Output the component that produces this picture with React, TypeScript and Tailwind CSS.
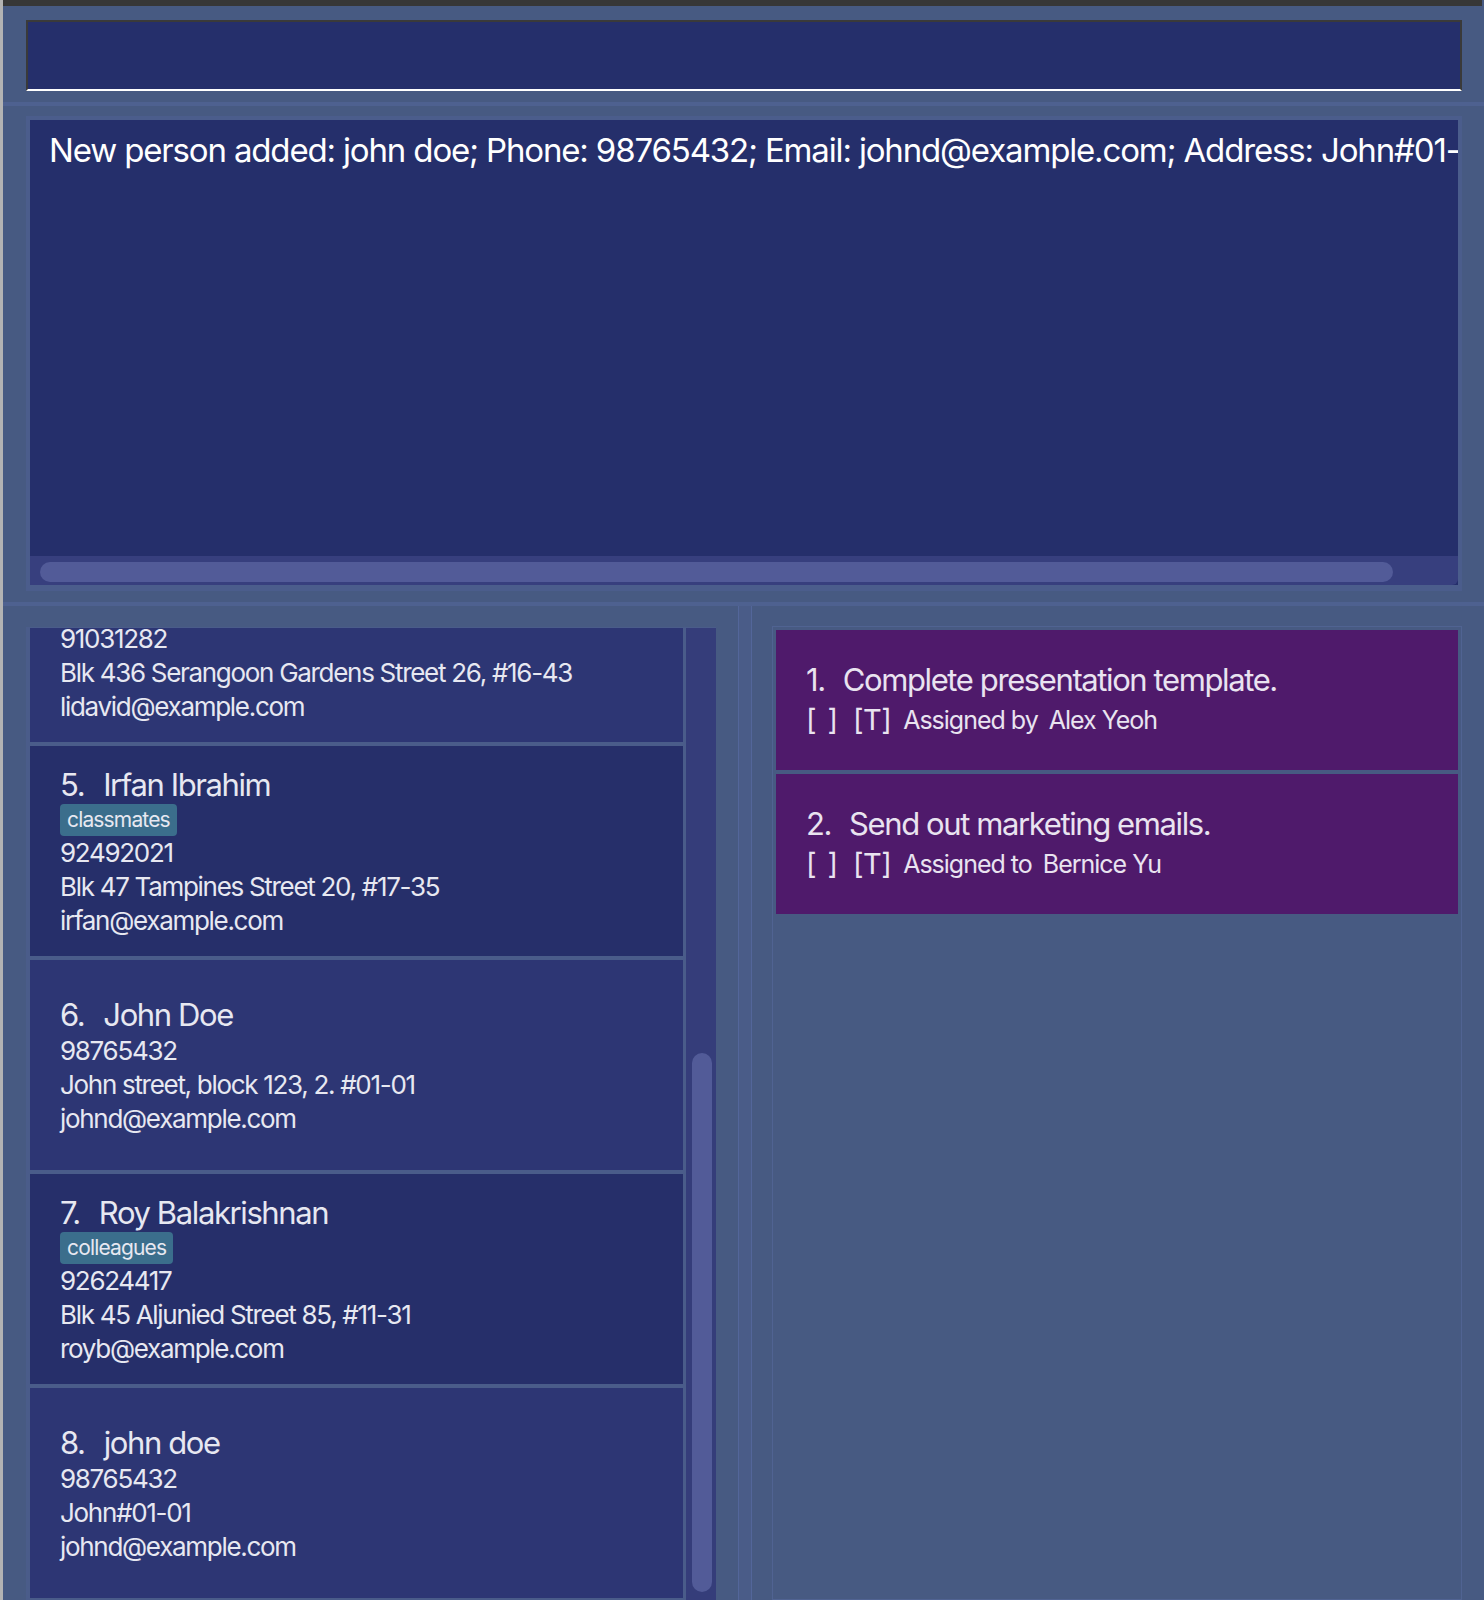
import React from 'react'

type Person = {
  id: number
  name: string
  tag?: string
  phone: string
  address: string
  email: string
}

// card 4 is scrolled partly out of view; only its last three lines show
const scrolledCard = {
  phone: '91031282',
  address: 'Blk 436 Serangoon Gardens Street 26, #16-43',
  email: 'lidavid@example.com',
}

const persons: Person[] = [
  { id: 5, name: 'Irfan Ibrahim', tag: 'classmates', phone: '92492021', address: 'Blk 47 Tampines Street 20, #17-35', email: 'irfan@example.com' },
  { id: 6, name: 'John Doe', phone: '98765432', address: 'John street, block 123, 2. #01-01', email: 'johnd@example.com' },
  { id: 7, name: 'Roy Balakrishnan', tag: 'colleagues', phone: '92624417', address: 'Blk 45 Aljunied Street 85, #11-31', email: 'royb@example.com' },
  { id: 8, name: 'john doe', phone: '98765432', address: 'John#01-01', email: 'johnd@example.com' },
]

const tasks = [
  { id: 1, title: 'Complete presentation template.', relation: 'Assigned by', who: 'Alex Yeoh' },
  { id: 2, title: 'Send out marketing emails.', relation: 'Assigned to', who: 'Bernice Yu' },
]

const detail = 'text-[26px] leading-[34px] tracking-[-0.05em]'

function PersonCard({ person }: { person: Person }) {
  return (
    <div
      className={`h-[210px] shrink-0 flex flex-col justify-center pl-[30px] text-[#e7e8f1] whitespace-nowrap ${
        person.id % 2 === 0 ? 'bg-[#2d3674]' : 'bg-[#262f6a]'
      }`}
    >
      <div className="flex h-[39px] items-center text-[31px] leading-[39px] tracking-[-0.045em]">
        <span className="mr-[19px]">{person.id}.</span>
        <span>{person.name}</span>
      </div>
      {person.tag && (
        <div className="flex">
          <span className="h-[32px] rounded-[4px] bg-[#3b6e8c] px-[7px] text-[21px] leading-[32px] tracking-[-0.04em]">
            {person.tag}
          </span>
        </div>
      )}
      <div className={detail}>{person.phone}</div>
      <div className={detail}>{person.address}</div>
      <div className={detail}>{person.email}</div>
    </div>
  )
}

function TaskCard({ task }: { task: (typeof tasks)[number] }) {
  return (
    <div className="h-[140px] shrink-0 flex flex-col justify-center pl-[30px] bg-[#4f1a6b] text-[#e9e3f0] whitespace-nowrap">
      <div className="flex h-[40px] items-center text-[31px] leading-[40px] tracking-[-0.045em]">
        <span className="mr-[18px]">{task.id}.</span>
        <span>{task.title}</span>
      </div>
      <div className="flex h-[40px] items-center">
        <span className="flex w-[32px] justify-between text-[29px] leading-[40px]">
          <span>[</span>
          <span>]</span>
        </span>
        <span className="ml-[15px] text-[29px] leading-[40px] tracking-[-0.02em]">[T]</span>
        <span className="ml-[12px] text-[25px] leading-[40px] tracking-[-0.04em]">{task.relation}</span>
        <span className="ml-[11px] text-[25px] leading-[40px] tracking-[-0.04em]">{task.who}</span>
      </div>
    </div>
  )
}

export default function App() {
  return (
    <div className="flex h-[1600px] w-[1484px] overflow-hidden bg-[#475a82] font-['Inter','Liberation_Sans',sans-serif]">
      <div className="w-[3px] shrink-0 bg-[#b3b3b3]" />
      <div className="flex min-w-0 flex-1 flex-col">
        <div className="mr-[2px] h-[6px] shrink-0 bg-[#373737]" />

        {/* command box */}
        <div className="shrink-0 pl-[23px] pr-[22px] pt-[14px]">
          <div className="h-[71px] border-x-2 border-t-2 border-b-2 border-[#3a3a3a] border-b-white bg-[#252f6b]" />
        </div>

        <div className="mt-[11px] h-[4px] shrink-0 bg-[#4e6190]" />

        {/* result display */}
        <div className="shrink-0 pl-[23px] pr-[22px] pt-[10px]">
          <div className="bg-[#4b5d8c] px-[4px] pb-[6px] pt-[4px]">
            <div className="flex h-[465px] flex-col overflow-hidden bg-[#252f6b]">
              <div className="flex-1 whitespace-nowrap pl-[19px] pt-[10px] text-[33px] leading-[40px] tracking-[-0.035em] text-white">
                New person added: john doe; Phone: 98765432; Email: johnd@example.com; Address: John#01-
              </div>
              <div className="h-[29px] shrink-0 rounded-br-[6px] bg-[#373f7e] pl-[10px] pt-[6px]">
                <div className="h-[20px] w-[1353px] rounded-[10px] bg-[#525b98]" />
              </div>
            </div>
          </div>
        </div>

        <div className="mt-[11px] h-[4px] shrink-0 bg-[#4e6190]" />

        {/* lists */}
        <div className="flex min-h-0 flex-1 pl-[23px]">
          <div className="mt-[21px] flex w-[690px] shrink-0 gap-[3px] bg-[#4a5c8a] pl-[4px] pt-[1px]">
            <div className="flex w-[653px] flex-col gap-[4px]">
              <div className="h-[114px] shrink-0 whitespace-nowrap bg-[#2d3674] pl-[30px] text-[#e7e8f1]">
                <div className={`${detail} !leading-[22px] mb-[6px]`}>{scrolledCard.phone}</div>
                <div className={detail}>{scrolledCard.address}</div>
                <div className={detail}>{scrolledCard.email}</div>
              </div>
              {persons.map((p) => (
                <PersonCard key={p.id} person={p} />
              ))}
            </div>
            <div className="w-[30px] shrink-0 bg-[#353d7a] pl-[6px] pt-[425px]">
              <div className="h-[539px] w-[20px] rounded-[10px] bg-[#525b98]" />
            </div>
          </div>

          <div className="ml-[22px] w-[14px] shrink-0 border-x border-[#53669a] bg-[#4a5c88]" />

          <div className="ml-[20px] mt-[20px] w-[690px] shrink-0 border border-[#506392] p-[3px]">
            <div className="flex flex-col gap-[4px]">
              {tasks.map((t) => (
                <TaskCard key={t.id} task={t} />
              ))}
            </div>
          </div>
        </div>
      </div>
    </div>
  )
}
